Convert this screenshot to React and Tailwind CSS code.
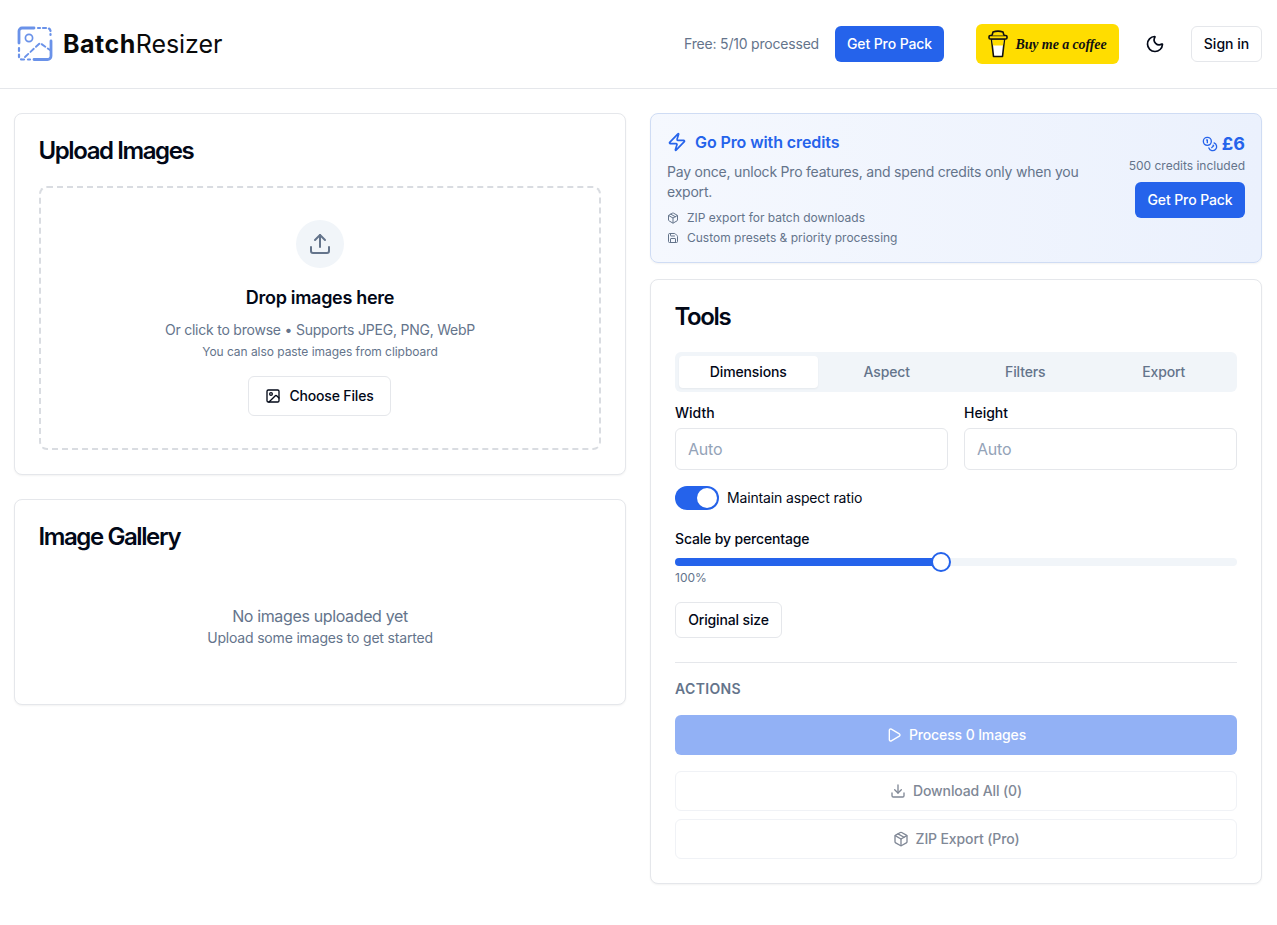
import React from "react";
import { Moon, Zap, Package, Save, Coins, Upload, Image as ImageIcon, Play, Download } from "lucide-react";

function Logo() {
  return (
    <svg width="36" height="36" viewBox="0 0 36 36" fill="none" stroke="#6a92e9" strokeWidth="2.200" strokeLinecap="round" strokeLinejoin="round">
      <path d="M2 17V5a3 3 0 0 1 3-3h12" strokeWidth="2.800" />
      <path d="M21 2h2M26 2h4a3.500 3.500 0 0 1 3.500 3v4" strokeDasharray="3 3" />
      <path d="M34 15v15a3.500 3.500 0 0 1-3.500 3.500H17" strokeWidth="2.800" />
      <path d="M13 33.500h-2M7 33.500H5a3 3 0 0 1-3-3v-2M2 25v-3" strokeDasharray="3 3" />
      <circle cx="12" cy="12" r="3.600" strokeWidth="1.700" />
      <path d="M8 31l15-14 10 7" strokeWidth="1.900" strokeDasharray="4.500 3" />
    </svg>
  );
}

function Cup() {
  return (
    <svg width="20" height="28" viewBox="0 0 20 28" fill="none" stroke="#111" strokeWidth="1.600" strokeLinejoin="round">
      <path d="M3.500 9l2 17.500h9l2-17.500z" fill="#fff" />
      <path d="M4.300 9.800h11.400l-.6 5.700H4.900z" fill="#ffdd00" stroke="none" />
      <rect x="1" y="5.500" width="18" height="3.500" rx="1.200" fill="#ffdd00" />
      <path d="M4 5.500l1-3.500c3-1 7-1 10 0l1 3.500" fill="#ffdd00" />
    </svg>
  );
}

function Card({ className, children }) {
  return <div className={"rounded-lg border border-[#e5e7eb] bg-white shadow-xs " + className}>{children}</div>;
}

function Title({ children }) {
  return <h2 className="-ml-[0.500px] text-2xl leading-none font-semibold tracking-[-1.400px] text-[#020817]">{children}</h2>;
}

export default function App() {
  return (
    <div className="min-h-[925px] bg-white font-['Inter',sans-serif] text-[#020817]">
      <header className="flex h-[89px] items-center justify-between border-b border-[#e5e7eb] pr-[15px] pl-[17px]">
        <div className="flex items-center gap-[10px]">
          <Logo />
          <div className="text-[25px] leading-none text-[#0a0a0a]">
            <span className="font-bold tracking-[0.5px]">Batch</span>
            <span className="font-normal tracking-[-0.050px]">Resizer</span>
          </div>
        </div>
        <div className="flex items-center">
          <span className="text-sm tracking-[-0.200px] text-[#64748b]">Free: 5/10 processed</span>
          <button className="ml-4 h-[36px] w-[109px] rounded-md bg-[#2563eb] text-sm font-medium tracking-[-0.100px] text-white">Get Pro Pack</button>
          <div className="ml-8 flex h-[40px] w-[143px] items-center justify-center gap-[7px] rounded-md bg-[#ffdd00]">
            <Cup />
            <span className="font-['Liberation_Serif',serif] text-[14px] font-bold tracking-[-0.100px] text-[#111] italic">Buy me a coffee</span>
          </div>
          <button className="ml-[26px] flex h-5 w-5 items-center justify-center">
            <Moon size={20} strokeWidth={2} className="text-[#020817]" />
          </button>
          <button className="ml-[26px] h-[36px] w-[71px] rounded-md border border-[#e5e7eb] bg-white text-sm font-medium">Sign in</button>
        </div>
      </header>

      <main className="ml-[14px] grid w-[1248px] grid-cols-2 items-start gap-6 pt-6">
        <div className="flex flex-col gap-6">
          <Card className="h-[362px] p-6">
            <div className="pt-[1px]">
              <Title>Upload Images</Title>
            </div>
            <div className="mt-[23px] flex h-[264px] flex-col items-center rounded-lg border-2 border-dashed border-[#d9dce1] pt-[32px]">
              <div className="flex h-12 w-12 items-center justify-center rounded-full bg-[#f1f5f9]">
                <Upload size={24} strokeWidth={2} className="text-[#64748b]" />
              </div>
              <h3 className="mt-[16px] text-lg leading-7 font-semibold tracking-[-0.300px]">Drop images here</h3>
              <p className="mt-[8px] text-sm leading-5 tracking-[-0.220px] text-[#64748b]">Or click to browse • Supports JPEG, PNG, WebP</p>
              <p className="mt-[4px] text-xs leading-4 tracking-[-0.050px] text-[#64748b]">You can also paste images from clipboard</p>
              <button className="mt-[16px] mr-[1px] flex h-10 w-[143px] items-center justify-center gap-2 rounded-md border border-[#e5e7eb] bg-white text-sm font-medium tracking-[-0.160px]">
                <ImageIcon size={16} strokeWidth={2} />
                Choose Files
              </button>
            </div>
          </Card>
          <Card className="h-[206px] p-6">
            <div className="pt-[1px]">
              <Title>Image Gallery</Title>
            </div>
            <div className="mt-[55px] flex flex-col items-center text-[#64748b]">
              <p className="text-base leading-6 tracking-[-0.360px]">No images uploaded yet</p>
              <p className="text-sm leading-5 tracking-[-0.180px]">Upload some images to get started</p>
            </div>
          </Card>
        </div>

        <div className="flex flex-col gap-4">
          <div className="flex h-[150px] justify-between rounded-lg border border-[#cfdcf4] bg-gradient-to-r from-[#f5f8fe] to-[#ebf1fd] px-4 pt-4 shadow-xs">
            <div className="w-[430px]">
              <div className="flex items-center gap-2 text-[#2563eb]">
                <Zap size={20} strokeWidth={2} />
                <span className="text-base leading-6 font-semibold tracking-[-0.100px]">Go Pro with credits</span>
              </div>
              <p className="mt-[8px] text-sm leading-5 tracking-[-0.210px] text-[#64748b]">Pay once, unlock Pro features, and spend credits only when you export.</p>
              <div className="mt-[6px] flex items-center gap-2 text-xs leading-5 text-[#64748b]">
                <Package size={12} strokeWidth={2} />
                ZIP export for batch downloads
              </div>
              <div className="mt-0 flex items-center gap-2 text-xs leading-5 text-[#64748b]">
                <Save size={12} strokeWidth={2} />
                Custom presets &amp; priority processing
              </div>
            </div>
            <div className="flex flex-col items-end">
              <div className="flex items-center gap-1 text-[#2563eb]">
                <Coins size={16} strokeWidth={2} />
                <span className="text-lg leading-7 font-bold">£6</span>
              </div>
              <span className="text-xs leading-4 text-[#64748b]">500 credits included</span>
              <button className="mt-2 h-[36px] w-[110px] rounded-md bg-[#2563eb] text-sm font-medium tracking-[-0.100px] text-white">Get Pro Pack</button>
            </div>
          </div>

          <Card className="h-[605px] px-6 pt-6">
            <div className="pt-[1px]">
              <Title>Tools</Title>
            </div>
            <div className="mt-[23px] grid h-10 grid-cols-4 rounded-md bg-[#f1f5f9] p-1 text-sm font-medium tracking-[-0.120px] text-[#64748b]">
              <div className="flex items-center justify-center rounded-sm bg-white text-[#020817] shadow-xs">Dimensions</div>
              <div className="flex items-center justify-center">Aspect</div>
              <div className="flex items-center justify-center">Filters</div>
              <div className="flex items-center justify-center">Export</div>
            </div>
            <div className="mt-[11px] grid grid-cols-2 gap-4">
              <div>
                <label className="block text-sm leading-5 font-medium">Width</label>
                <input placeholder="Auto" className="mt-[5px] h-[42px] w-full rounded-md border border-[#e5e7eb] bg-white px-3 text-base tracking-[-0.200px] outline-none placeholder:text-[#94a3b8]" />
              </div>
              <div>
                <label className="block text-sm leading-5 font-medium">Height</label>
                <input placeholder="Auto" className="mt-[5px] h-[42px] w-full rounded-md border border-[#e5e7eb] bg-white px-3 text-base tracking-[-0.200px] outline-none placeholder:text-[#94a3b8]" />
              </div>
            </div>
            <div className="mt-4 flex items-center gap-2">
              <div className="flex h-6 w-11 items-center justify-end rounded-full bg-[#2563eb] pr-[2px]">
                <div className="h-5 w-5 rounded-full bg-white shadow-xs" />
              </div>
              <span className="text-sm leading-5 font-normal tracking-[-0.150px]">Maintain aspect ratio</span>
            </div>
            <label className="mt-[19px] block text-sm leading-5 font-medium tracking-[-0.160px]">Scale by percentage</label>
            <div className="relative mt-[9px] h-2 rounded-full bg-[#f1f5f9]">
              <div className="h-2 w-[47.300%] rounded-full bg-[#2563eb]" />
              <div className="absolute top-[-6px] left-[256px] h-5 w-5 rounded-full border-2 border-[#2563eb] bg-white" />
            </div>
            <div className="mt-[4px] text-xs leading-4 text-[#64748b]">100%</div>
            <button className="mt-4 h-9 w-[107px] rounded-md border border-[#e5e7eb] bg-white text-sm font-medium tracking-[-0.150px]">Original size</button>
            <div className="mt-6 h-px bg-[#e5e7eb]" />
            <div className="mt-4 text-sm leading-5 font-semibold tracking-wide text-[#64748b] uppercase">Actions</div>
            <button className="mt-4 flex h-10 w-full items-center justify-center gap-[7px] rounded-md bg-[#92b1f5] text-sm font-medium tracking-[-0.120px] text-white">
              <Play size={16} strokeWidth={2} />
              Process 0 Images
            </button>
            <button className="mt-4 flex h-10 w-full items-center justify-center gap-[7px] rounded-md border border-[#f0f2f6] bg-white text-sm font-medium tracking-[-0.120px] text-[#808896]">
              <Download size={16} strokeWidth={2} />
              Download All (0)
            </button>
            <button className="mt-2 flex h-10 w-full items-center justify-center gap-[7px] rounded-md border border-[#f0f2f6] bg-white text-sm font-medium tracking-[-0.120px] text-[#808896]">
              <Package size={16} strokeWidth={2} />
              ZIP Export (Pro)
            </button>
          </Card>
        </div>
      </main>
    </div>
  );
}
